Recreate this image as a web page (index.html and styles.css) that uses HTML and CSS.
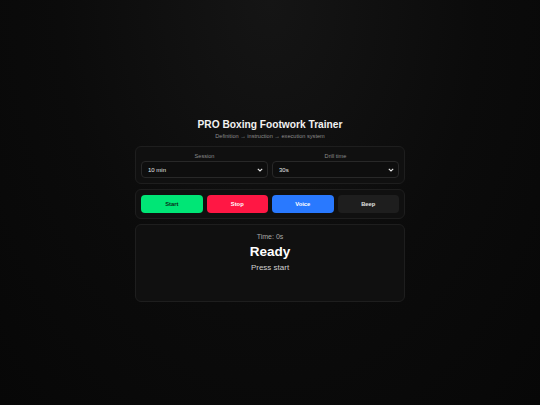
FILE: index.html
```html
<!DOCTYPE html>
<html lang="en">
<head>
    <meta charset="UTF-8">
    <meta name="viewport" content="width=device-width, initial-scale=1.0">
    <title>PRO Boxing Footwork Trainer</title>
    <link rel="stylesheet" href="styles.css">
</head>
<body>
    <div class="app">
        <h1>PRO Boxing Footwork Trainer</h1>
        <p class="subtitle">Definition → instruction → execution system</p>

        <!-- Settings -->
        <div class="panel settings">
            <label class="field">
                <span>Session</span>
                <select>
                    <option>10 min</option>
                    <option>20 min</option>
                    <option>30 min</option>
                </select>
            </label>
            <label class="field">
                <span>Drill time</span>
                <select>
                    <option>30s</option>
                    <option>45s</option>
                    <option>60s</option>
                </select>
            </label>
        </div>

        <!-- Controls -->
        <div class="panel controls">
            <button class="btn start">Start</button>
            <button class="btn stop">Stop</button>
            <button class="btn voice">Voice</button>
            <button class="btn beep">Beep</button>
        </div>

        <!-- Display -->
        <div class="panel display">
            <div class="time">Time: 0s</div>
            <div class="drill">Ready</div>
            <div class="instruction">Press start</div>
        </div>
    </div>
</body>
</html>
```

FILE: styles.css
```css
/* Page */
body {
    margin: 0;
    min-height: 100vh;
    display: flex;
    align-items: center;
    justify-content: center;
    font-family: 'Liberation Sans', Arial, sans-serif;
    background: radial-gradient(ellipse at 50% 0%, #151515 0%, #0b0b0b 55%, #070707 100%);
    color: #eeeeee;
}

.app {
    width: 270px;
    text-align: center;
    padding-top: 20px;
}

h1 {
    font-size: 10.2px;
    line-height: 13px;
    margin: 0 0 1px;
    color: #f2f2f2;
}

.subtitle {
    font-size: 5.6px;
    line-height: 8px;
    margin: 0 0 6px;
    color: #8c8c8c;
}

/* Panels */
.panel {
    background-color: #101010;
    border: 1px solid #1e1e1e;
    border-radius: 6px;
    padding: 5px;
    margin-bottom: 5px;
}

.settings {
    display: grid;
    grid-template-columns: 1fr 1fr;
    gap: 4px;
    padding-top: 6px;
}

.field {
    display: flex;
    flex-direction: column;
    gap: 1px;
}

.field span {
    font-size: 5.6px;
    line-height: 7px;
    color: #8c8c8c;
}

.field select {
    appearance: none;
    height: 17px;
    padding: 0 6px;
    font-family: inherit;
    font-size: 6px;
    color: #e6e6e6;
    background-color: #0e0e0e;
    background-image: url("data:image/svg+xml,%3Csvg xmlns='http://www.w3.org/2000/svg' width='6' height='4' viewBox='0 0 6 4'%3E%3Cpath d='M0.8 0.8 L3 3 L5.2 0.8' fill='none' stroke='%23e6e6e6' stroke-width='1.1'/%3E%3C/svg%3E");
    background-repeat: no-repeat;
    background-position: right 4px center;
    border: 1px solid #282828;
    border-radius: 4px;
}

/* Buttons */
.controls {
    display: grid;
    grid-template-columns: repeat(4, 1fr);
    gap: 4px;
}

.btn {
    height: 18px;
    border: none;
    border-radius: 4px;
    font-family: inherit;
    font-size: 5.8px;
    font-weight: bold;
    cursor: pointer;
}

.start {
    background-color: #00e676;
    color: #0a2a16;
}

.stop {
    background-color: #ff1744;
    color: #ffffff;
}

.voice {
    background-color: #2979ff;
    color: #ffffff;
}

.beep {
    background-color: #1e1e1e;
    color: #e0e0e0;
}

/* Display */
.display {
    min-height: 64px;
    padding-top: 7px;
}

.time {
    font-size: 7px;
    line-height: 9px;
    color: #a8a8a8;
}

.drill {
    font-size: 13.5px;
    line-height: 18px;
    font-weight: bold;
    color: #ffffff;
    margin-top: 2px;
}

.instruction {
    font-size: 8px;
    line-height: 11px;
    color: #cfcfcf;
    margin-top: 1px;
}
```
